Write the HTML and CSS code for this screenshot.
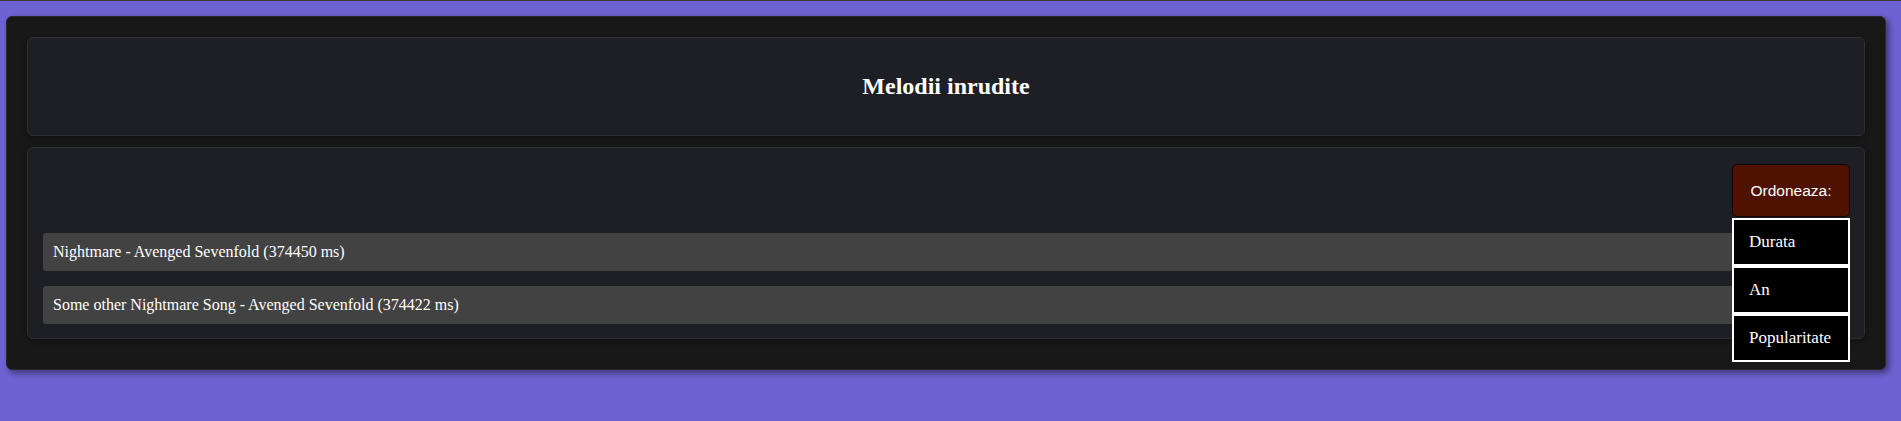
FILE: index.html
```html
<!DOCTYPE html>
<html lang="ro">
<head>
<meta charset="utf-8">
<title>Melodii inrudite</title>
<link rel="stylesheet" href="styles.css">
</head>
<body>
<div class="topline"></div>
<main class="shell">
  <section class="card title-card">
    <h2 class="title">Melodii inrudite</h2>
  </section>
  <section class="card list-card">
    <div class="toolbar">
      <div class="sort">
        <button class="sort-btn" type="button">Ordoneaza:</button>
        <ul class="sort-menu">
          <li class="sort-item">Durata</li>
          <li class="sort-item">An</li>
          <li class="sort-item">Popularitate</li>
        </ul>
      </div>
    </div>
    <ul class="songs">
      <li class="song">Nightmare - Avenged Sevenfold (374450 ms)</li>
      <li class="song">Some other Nightmare Song - Avenged Sevenfold (374422 ms)</li>
    </ul>
  </section>
</main>
</body>
</html>
```

FILE: styles.css
```css
html, body {
  margin: 0;
  padding: 0;
}
body {
  background: #6c62d2;
  font-family: "Liberation Serif", "Times New Roman", serif;
  color: #fff;
  height: 421px;
  overflow: hidden;
}
.topline {
  height: 1px;
  background: #3b3b3b;
}
.shell {
  box-sizing: border-box;
  width: 1880px;
  margin: 15px 0 0 6px;
  padding: 20px 20px 30px 20px;
  background: #181818;
  border: 1px solid #2a2a2a;
  border-radius: 6px;
  box-shadow: 3px 3px 6px rgba(0, 0, 0, 0.45);
  display: flex;
  flex-direction: column;
  gap: 11px;
}
.card {
  box-sizing: border-box;
  background: #1e1f24;
  border: 1px solid #2e2f33;
  border-radius: 6px;
  box-shadow: 0 2px 5px rgba(0, 0, 0, 0.35);
}
.title-card {
  height: 99px;
  display: flex;
  align-items: center;
  justify-content: center;
}
.title {
  margin: 0;
  font-size: 24px;
  font-weight: bold;
  color: #fff;
}
.list-card {
  padding: 16px 14px 14px 15px;
}
.toolbar {
  display: flex;
  justify-content: flex-end;
}
.sort {
  position: relative;
  width: 118px;
}
.sort-btn {
  display: block;
  box-sizing: border-box;
  width: 118px;
  height: 53px;
  margin: 0;
  padding: 0;
  background: #4f1200;
  color: #fff;
  border: 1px solid #120604;
  border-radius: 5px;
  font-family: "Liberation Sans", Arial, sans-serif;
  font-size: 15.5px;
  text-align: center;
}
.sort-menu {
  position: absolute;
  top: calc(100% + 1px);
  left: 0;
  width: 118px;
  margin: 0;
  padding: 0;
  list-style: none;
  z-index: 2;
}
.sort-item {
  box-sizing: border-box;
  height: 48px;
  line-height: 44px;
  padding: 0 15px;
  background: #000;
  border: 2px solid #fff;
  font-size: 17px;
  color: #fff;
}
.songs {
  list-style: none;
  margin: 16px 0 0 0;
  padding: 0;
  display: flex;
  flex-direction: column;
  gap: 15px;
}
.song {
  height: 38px;
  line-height: 38px;
  padding-left: 10px;
  background: #424242;
  border-radius: 3px;
  font-size: 16px;
  color: #fff;
}
```
